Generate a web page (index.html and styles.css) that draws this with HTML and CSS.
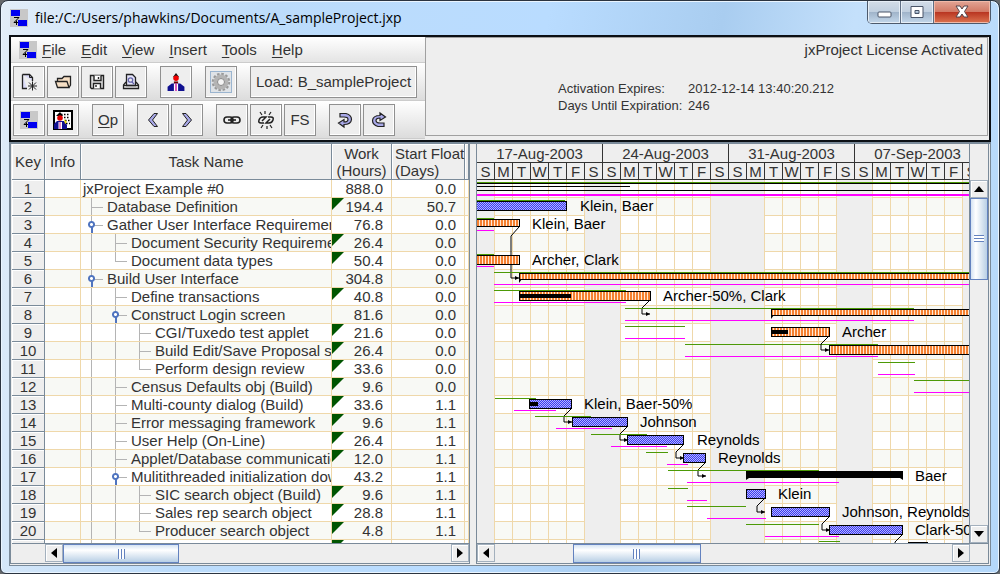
FILE: index.html
```
<!DOCTYPE html>
<html lang="en">
<head>
<meta charset="utf-8">
<title>A_sampleProject.jxp</title>
<link rel="stylesheet" href="styles.css">
</head>
<body>

<!-- shared shapes -->
<svg class="defs" width="0" height="0">
  <defs>
    <symbol id="logo" viewBox="0 0 18 18">
      <rect width="18" height="18" fill="#c8c8c8"/>
      <rect x="1" y="1" width="9" height="6" fill="#0000f0"/>
      <rect x="8" y="11" width="9" height="6" fill="#0000f0"/>
      <path d="M4 8.500H9L4 13.500H8M6.500 11.500V16" stroke="#000" fill="none"/>
    </symbol>
    <symbol id="man" viewBox="1 0 18 19">
      <path d="M7 5L10 1L13 5Z" fill="#111"/>
      <circle cx="10" cy="6" r="2.6" fill="#f00000"/>
      <path d="M8 9h4v3H8z" fill="#600"/>
      <path d="M2 18V14L6 11H14L18 14V18Z" fill="#101090"/>
      <path d="M8 11H12V18H8Z" fill="#fff"/>
      <path d="M10 11V18" stroke="#d020a0" stroke-width="1.4"/>
    </symbol>
  </defs>
</svg>

<div class="window">
  <div class="titlebar">
    <svg class="logo" width="18" height="18"><use href="#logo"/></svg>
    <h1>file:/C:/Users/phawkins/Documents/A_sampleProject.jxp</h1>
    <div class="winButtons">
      <button class="win min" aria-label="Minimize"><svg width="16" height="14"><rect x="2" y="7" width="13" height="5" rx="1" fill="#fff" stroke="#4a5568"/></svg></button>
      <button class="win max" aria-label="Maximize"><svg width="16" height="14"><path d="M2 1.500H14V12.500H2Z M6 5.500V8.500H10V5.500Z" fill="#fff" fill-rule="evenodd" stroke="#4a5568"/></svg></button>
      <button class="win close" aria-label="Close"><svg width="16" height="14"><path d="M2 1H6L8 4L10 1H14L10.500 6.500L14 12H10L8 9L6 12H2L5.500 6.500Z" fill="#fff" stroke="#54454a"/></svg></button>
    </div>
  </div>

  <div class="top">
    <div class="tools">
      <nav class="menu">
        <svg class="logo" width="18" height="18"><use href="#logo"/></svg>
        <button><u>F</u>ile</button>
        <button><u>E</u>dit</button>
        <button><u>V</u>iew</button>
        <button><u>I</u>nsert</button>
        <button><u>T</u>ools</button>
        <button><u>H</u>elp</button>
      </nav>
      <div class="toolbar">
        <div class="group">
          <button class="tool" aria-label="New"><svg width="20" height="20" fill="none" stroke="#222"><path d="M3.500 2.500H10.500L13.500 5.500V9M3.500 2.500V16.500H8" fill="#dcdcf8" stroke-width="1.300"/><path d="M10.500 2.500V5.500H13.500"/><path d="M13.500 9.500V18.500M9 14H18M10 10.500L17 17.500M17 10.500L10 17.500"/></svg></button>
          <button class="tool" aria-label="Open"><svg width="20" height="20" fill="#f6dfc4" stroke="#222" stroke-width="1.300"><path d="M4.500 9V6.500H9L11 4.500H17.500V13L16 15.500"/><path d="M2.500 9.500H14L16 15.500H4.500Z"/></svg></button>
          <button class="tool" aria-label="Save"><svg width="20" height="20" fill="none" stroke="#222" stroke-width="1.400"><path d="M3.500 3.500H16.500V16.500H4.500L3.500 15.500Z" fill="#ddd"/><path d="M7 3.500V8.500H14V3.500M6.500 16.500V11.500H13.500V16.500" fill="#fff"/><path d="M11.500 5V7M9 13V15"/></svg></button>
          <button class="tool" aria-label="Print preview"><svg width="20" height="20" fill="#eee" stroke="#222" stroke-width="1.300"><path d="M5 10L2.500 13V16.500H17.500V13L15 10"/><path d="M5.500 13.500V2.500H11.500L14.500 5.500V13.500Z" fill="#e4e4fa"/><path d="M3 13.500H17"/><circle cx="9.500" cy="8" r="2.200" stroke="#66a"/><path d="M11 10L13 12" stroke="#66a"/></svg></button>
        </div>
        <div class="group">
          <button class="tool" aria-label="Resources"><svg width="20" height="20"><use href="#man"/></svg></button>
        </div>
        <div class="group">
          <button class="tool" aria-label="Settings"><svg width="22" height="22"><rect x=".5" y=".5" width="21" height="21" fill="#dfe3e7" stroke="#9bb5d0"/><circle cx="11" cy="11" r="8" fill="none" stroke="#999" stroke-width="2.500" stroke-dasharray="2.500 1.690"/><circle cx="11" cy="11" r="5.500" fill="#eee" stroke="#b4b4b4" stroke-width="4"/><circle cx="11" cy="11" r="3.500" fill="#f4f4f4" stroke="#888"/></svg></button>
        </div>
        <div class="group">
          <button class="tool load">Load: B_sampleProject</button>
        </div>
      </div>
      <div class="toolbar">
        <div class="group">
          <button class="tool" aria-label="Gantt"><svg width="18" height="18"><use href="#logo"/></svg></button>
          <button class="tool" aria-label="Resource usage"><svg width="20" height="20"><rect x="1" y="1" width="18" height="18" fill="#fff" stroke="#000" stroke-width="2"/><path d="M8 4.500H17M11 7.500H17M12 10.500H17M13 13.500H17" stroke="#000" stroke-width="1.500" stroke-dasharray="1.500 1.500"/><path d="M3 6L7 2L10 6Z"/><circle cx="7" cy="8" r="2.800" fill="#e00000"/><path d="M1 19V14L4 11H11L14 15V19Z" fill="#101090"/><path d="M5.500 12H9V19H5.500Z" fill="#fff"/><path d="M7 12V19" stroke="#d020a0"/><path d="M11 9L14 12L12 14Z" fill="#f0e000"/></svg></button>
        </div>
        <div class="group">
          <button class="tool op"><u>O</u>p</button>
        </div>
        <div class="group">
          <button class="tool" aria-label="Outdent"><svg width="20" height="20"><path d="M11 3.500H14.500L9.500 10L14.500 16.500H11L5.500 10Z" fill="#a8a8e8" stroke="#222"/></svg></button>
          <button class="tool" aria-label="Indent"><svg width="20" height="20"><path d="M9 3.500H5.500L10.500 10L5.500 16.500H9L14.500 10Z" fill="#a8a8e8" stroke="#222"/></svg></button>
        </div>
        <div class="group">
          <button class="tool" aria-label="Link"><svg width="20" height="20" fill="none" stroke="#222" stroke-width="1.600"><rect x="2" y="7" width="9" height="6" rx="3"/><rect x="9" y="7" width="9" height="6" rx="3"/><path d="M6 10H14"/></svg></button>
          <button class="tool" aria-label="Unlink"><svg width="20" height="20" fill="none" stroke="#222" stroke-width="1.500"><path d="M8 13H5Q2 13 3 10Q4 7 7 7H10L6 11M12 7H15Q18 7 17 10Q16 13 13 13H10L14 9"/><path d="M4 2L6 5M9 1V4M15 2L13 5M5 18L7 15M11 19V16M16 18L14 15" stroke-width="1.200"/></svg></button>
          <button class="tool fs">FS</button>
        </div>
        <div class="group">
          <button class="tool" aria-label="Undo"><svg width="20" height="20"><path d="M5 3.500H11Q16.500 5 16.500 9.500Q16 14.500 9 14.500V17L3.500 13L9 9.500V12Q13 12 13 9.500Q13 7 9 7H5Z" fill="#a8a8e8" stroke="#222" stroke-width="1.200"/></svg></button>
          <button class="tool" aria-label="Redo"><svg width="20" height="20"><path d="M15 16.500H9Q3.500 15 3.500 10.500Q4 5.500 11 5.500V3L16.500 7L11 10.500V8Q7 8 7 10.500Q7 13 11 13H15Z" fill="#a8a8e8" stroke="#222" stroke-width="1.200"/></svg></button>
        </div>
      </div>
    </div>

    <div class="license">
      <p class="status">jxProject License Activated</p>
      <dl>
        <dt>Activation Expires:</dt><dd>2012-12-14 13:40:20.212</dd>
        <dt>Days Until Expiration:</dt><dd>246</dd>
      </dl>
    </div>
  </div>

  <div class="split">
    <div class="pane tasks">
      <div class="tableView">
        <table>
          <colgroup><col class="cKey"><col class="cInfo"><col class="cTask"><col class="cWork"><col class="cFloat"><col></colgroup>
          <thead>
            <tr><th>Key</th><th>Info</th><th>Task Name</th><th>Work<br>(Hours)</th><th class="left">Start Float<br>(Days)</th><th></th></tr>
          </thead>
          <tbody>
            <tr><th>1</th><td></td><td class="task">jxProject Example #0</td><td class="num">888.0</td><td class="num">0.0</td><td></td></tr>
            <tr><th>2</th><td></td><td class="task"><i class="tee"></i>Database Definition</td><td class="num mark">194.4</td><td class="num">50.7</td><td></td></tr>
            <tr><th>3</th><td></td><td class="task"><i class="tee knob"></i>Gather User Interface Requirements</td><td class="num">76.8</td><td class="num">0.0</td><td></td></tr>
            <tr><th>4</th><td></td><td class="task"><i class="line"></i><i class="tee"></i>Document Security Requirements</td><td class="num mark">26.4</td><td class="num">0.0</td><td></td></tr>
            <tr><th>5</th><td></td><td class="task"><i class="line"></i><i class="end"></i>Document data types</td><td class="num mark">50.4</td><td class="num">0.0</td><td></td></tr>
            <tr><th>6</th><td></td><td class="task"><i class="tee knob"></i>Build User Interface</td><td class="num">304.8</td><td class="num">0.0</td><td></td></tr>
            <tr><th>7</th><td></td><td class="task"><i class="line"></i><i class="tee"></i>Define transactions</td><td class="num mark">40.8</td><td class="num">0.0</td><td></td></tr>
            <tr><th>8</th><td></td><td class="task"><i class="line"></i><i class="tee knob"></i>Construct Login screen</td><td class="num">81.6</td><td class="num">0.0</td><td></td></tr>
            <tr><th>9</th><td></td><td class="task"><i class="line"></i><i class="line"></i><i class="tee"></i>CGI/Tuxedo test applet</td><td class="num mark">21.6</td><td class="num">0.0</td><td></td></tr>
            <tr><th>10</th><td></td><td class="task"><i class="line"></i><i class="line"></i><i class="tee"></i>Build Edit/Save Proposal screen</td><td class="num mark">26.4</td><td class="num">0.0</td><td></td></tr>
            <tr><th>11</th><td></td><td class="task"><i class="line"></i><i class="line"></i><i class="end"></i>Perform design review</td><td class="num mark">33.6</td><td class="num">0.0</td><td></td></tr>
            <tr><th>12</th><td></td><td class="task"><i class="line"></i><i class="tee"></i>Census Defaults obj (Build)</td><td class="num mark">9.6</td><td class="num">0.0</td><td></td></tr>
            <tr><th>13</th><td></td><td class="task"><i class="line"></i><i class="tee"></i>Multi-county dialog (Build)</td><td class="num mark">33.6</td><td class="num">1.1</td><td></td></tr>
            <tr><th>14</th><td></td><td class="task"><i class="line"></i><i class="tee"></i>Error messaging framework</td><td class="num mark">9.6</td><td class="num">1.1</td><td></td></tr>
            <tr><th>15</th><td></td><td class="task"><i class="line"></i><i class="tee"></i>User Help (On-Line)</td><td class="num mark">26.4</td><td class="num">1.1</td><td></td></tr>
            <tr><th>16</th><td></td><td class="task"><i class="line"></i><i class="tee"></i>Applet/Database communication</td><td class="num mark">12.0</td><td class="num">1.1</td><td></td></tr>
            <tr><th>17</th><td></td><td class="task"><i class="line"></i><i class="tee knob"></i>Mulitithreaded initialization download</td><td class="num">43.2</td><td class="num">1.1</td><td></td></tr>
            <tr><th>18</th><td></td><td class="task"><i class="line"></i><i class="line"></i><i class="tee"></i>SIC search object (Build)</td><td class="num mark">9.6</td><td class="num">1.1</td><td></td></tr>
            <tr><th>19</th><td></td><td class="task"><i class="line"></i><i class="line"></i><i class="tee"></i>Sales rep search object</td><td class="num mark">28.8</td><td class="num">1.1</td><td></td></tr>
            <tr><th>20</th><td></td><td class="task"><i class="line"></i><i class="line"></i><i class="end"></i>Producer search object</td><td class="num mark">4.8</td><td class="num">1.1</td><td></td></tr>
            <tr><th>21</th><td></td><td class="task"><i class="line"></i><i class="tee"></i>Communication dialog</td><td class="num mark">9.6</td><td class="num">1.1</td><td></td></tr>
          </tbody>
        </table>
      </div>
      <div class="hbar">
        <div class="corner"></div>
        <button class="arrow" aria-label="Scroll left"><svg width="8" height="10"><path d="M7 0V10L1 5Z"/></svg></button>
        <div class="track"><div class="thumb thumbTasks"></div></div>
        <button class="arrow" aria-label="Scroll right"><svg width="8" height="10"><path d="M1 0V10L7 5Z"/></svg></button>
      </div>
    </div>

    <div class="pane gantt">
      <div class="chart">
        <div class="chartMain">
          <div class="weeks">
            <div class="week"><b>17-Aug-2003</b><span>S</span><span>M</span><span>T</span><span>W</span><span>T</span><span>F</span><span>S</span></div>
            <div class="week"><b>24-Aug-2003</b><span>S</span><span>M</span><span>T</span><span>W</span><span>T</span><span>F</span><span>S</span></div>
            <div class="week"><b>31-Aug-2003</b><span>S</span><span>M</span><span>T</span><span>W</span><span>T</span><span>F</span><span>S</span></div>
            <div class="week"><b>07-Sep-2003</b><span>S</span><span>M</span><span>T</span><span>W</span><span>T</span><span>F</span><span>S</span></div>
          </div>
          <div class="plot">
            <svg class="bars" width="100%" height="100%">
              <defs>
                <pattern id="grid" x="17" width="18" height="36" patternUnits="userSpaceOnUse">
                  <rect width="18" height="18" fill="#fff"/>
                  <rect y="18" width="18" height="18" fill="#f8f9f5"/>
                  <path d="M.5 0V36M0 17.500H18M0 35.500H18" stroke="#efd8aa"/>
                </pattern>
                <pattern id="blue" width="2" height="2" patternUnits="userSpaceOnUse">
                  <rect width="2" height="2" fill="#b4b4ff"/>
                  <path d="M0 0h1v1h-1zM1 1h1v1h-1z" fill="#3a3af0"/>
                </pattern>
                <pattern id="orange" width="3" height="3" patternUnits="userSpaceOnUse">
                  <rect width="3" height="3" fill="#ffe9d6"/>
                  <rect width="2" height="3" fill="#f58030"/>
                </pattern>
                <g id="link">
                  <path d="M0 12L-8 20V26H0" class="wire"/>
                  <path d="M-4 24L0 26L-4 28Z"/>
                </g>
              </defs>

              <!-- working days, 1-Sep is a holiday -->
              <g fill="url(#grid)">
                <rect x="17" width="91" height="400"/>
                <rect x="143" width="91" height="400"/>
                <rect x="287" width="73" height="400"/>
                <rect x="395" width="91" height="400"/>
              </g>

              <g>
                <path class="early" d="M0 2.500H500"/>
                <path class="wire" d="M0 3.500H500M0 6.500H153M0 10.500H500"/>
                <path class="late thick" d="M0 15H500"/>
              </g>
              <g transform="translate(0 18)">
                <rect class="blue" x="-5.500" y="3.500" width="95" height="9"/>
                <path class="early" d="M0 2.500H88"/>
                <text x="103" y="13">Klein, Baer</text>
              </g>
              <g transform="translate(0 36)">
                <rect class="orange" x="-5.500" y="3.500" width="48" height="7"/>
                <path class="early" d="M0 2.500H17"/><path class="late" d="M0 14.500H17"/>
                <text x="55" y="13">Klein, Baer</text>
                <path class="wire" d="M42 11L34 20V62H42"/><path d="M38 60L42 62L38 64Z"/>
              </g>
              <g transform="translate(0 72)">
                <rect class="orange" x="-5.500" y="3.500" width="48" height="9"/>
                <path class="early" d="M0 2.500H17"/><path class="late" d="M0 14.500H17"/>
                <text x="55" y="13">Archer, Clark</text>
              </g>
              <g transform="translate(0 90)">
                <rect class="orange" x="42.500" y="3.500" width="470" height="6"/>
                <path d="M42 9H45L42 13Z"/>
                <path class="early" d="M17 2.500H500"/><path class="late" d="M17 14.500H500"/>
              </g>
              <g transform="translate(0 108)">
                <rect class="orange" x="42.500" y="3.500" width="131" height="9"/>
                <rect x="42" y="6" width="52" height="4"/>
                <path class="early" d="M17 2.500H149"/><path class="late" d="M17 14.500H149"/>
                <text x="186" y="13">Archer-50%, Clark</text>
                <use href="#link" x="173"/>
              </g>
              <g transform="translate(0 126)">
                <rect class="orange" x="294.500" y="3.500" width="220" height="6"/>
                <path d="M294 9H297L294 13Z"/>
                <path class="early" d="M148 2.500H437"/><path class="late" d="M148 14.500H437"/>
              </g>
              <g transform="translate(0 144)">
                <rect class="orange" x="294.500" y="3.500" width="58" height="9"/>
                <rect x="294" y="6" width="17" height="4"/>
                <path class="early" d="M148 2.500H208"/><path class="late" d="M148 14.500H208"/>
                <text x="365" y="13">Archer</text>
              </g>
              <g transform="translate(0 162)">
                <rect class="orange" x="352.500" y="3.500" width="160" height="9"/>
                <path class="early" d="M208 2.500H401"/><path class="late" d="M208 14.500H401"/>
                <use href="#link" x="352" y="-18"/>
              </g>
              <g transform="translate(0 180)">
                <path class="early" d="M401 2.500H438"/><path class="late" d="M401 14.500H438"/>
              </g>
              <g transform="translate(0 198)">
                <path class="early" d="M437 2.500H500"/><path class="late" d="M437 14.500H500"/>
              </g>
              <g transform="translate(0 216)">
                <rect class="blue" x="52.500" y="3.500" width="42" height="9"/>
                <rect x="53" y="6" width="8" height="4"/>
                <path class="early" d="M18 2.500H59"/><path class="late" d="M37 14.500H79"/>
                <text x="107" y="13">Klein, Baer-50%</text>
                <use href="#link" x="95"/>
              </g>
              <g transform="translate(0 234)">
                <rect class="blue" x="95.500" y="3.500" width="55" height="9"/>
                <path class="early" d="M58 2.500H114"/><path class="late" d="M79 14.500H135"/>
                <text x="163" y="13">Johnson</text>
                <use href="#link" x="151"/>
              </g>
              <g transform="translate(0 252)">
                <rect class="blue" x="150.500" y="3.500" width="56" height="9"/>
                <path class="early" d="M114 2.500H170"/><path class="late" d="M134 14.500H190"/>
                <text x="220" y="13">Reynolds</text>
                <use href="#link" x="207"/>
              </g>
              <g transform="translate(0 270)">
                <rect class="blue" x="206.500" y="3.500" width="22" height="9"/>
                <path class="early" d="M169 2.500H191"/><path class="late" d="M190 14.500H211"/>
                <text x="241" y="13">Reynolds</text>
                <use href="#link" x="229"/>
              </g>
              <g transform="translate(0 288)">
                <path class="early" d="M191 2.500H342"/><path class="late" d="M210 14.500H362"/>
                <path d="M269 3H426V12L423 10H272L269 12Z"/>
                <text x="438" y="13">Baer</text>
              </g>
              <g transform="translate(0 306)">
                <rect class="blue" x="269.500" y="3.500" width="19" height="9"/>
                <path class="early" d="M191 2.500H211"/><path class="late" d="M210 14.500H230"/>
                <text x="301" y="13">Klein</text>
                <use href="#link" x="288"/>
              </g>
              <g transform="translate(0 324)">
                <rect class="blue" x="294.500" y="3.500" width="58" height="9"/>
                <path class="early" d="M210 2.500H269"/><path class="late" d="M230 14.500H289"/>
                <text x="365" y="13">Johnson, Reynolds</text>
                <use href="#link" x="353"/>
              </g>
              <g transform="translate(0 342)">
                <rect class="blue" x="352.500" y="3.500" width="73" height="9"/>
                <path class="early" d="M269 2.500H342"/><path class="late" d="M288 14.500H362"/>
                <text x="438" y="13">Clark-50%, Baer</text>
                <use href="#link" x="426"/>
              </g>
              <g transform="translate(0 360)">
                <path class="early" d="M342 1.500H363"/>
                <rect x="431" y="2" width="20" height="9"/>
                <text x="464" y="13">Baer</text>
              </g>
            </svg>
          </div>
        </div>
        <div class="vbar">
          <div class="vcorner"></div>
          <button class="arrow" aria-label="Scroll up"><svg width="10" height="6"><path d="M0 6H10L5 0Z"/></svg></button>
          <div class="track vtrack"><div class="thumb vthumb"></div></div>
          <button class="arrow" aria-label="Scroll down"><svg width="10" height="6"><path d="M0 0H10L5 6Z"/></svg></button>
        </div>
      </div>
      <div class="hbar">
        <button class="arrow" aria-label="Scroll left"><svg width="8" height="10"><path d="M7 0V10L1 5Z"/></svg></button>
        <div class="track"><div class="thumb thumbGantt"></div></div>
        <button class="arrow" aria-label="Scroll right"><svg width="8" height="10"><path d="M1 0V10L7 5Z"/></svg></button>
        <div class="endCorner"></div>
      </div>
    </div>
  </div>
</div>

</body>
</html>
```
FILE: styles.css
```
* {
  box-sizing: border-box;
}

body {
  margin: 0;
  background: #66696c;
  font: 15px/17px "Liberation Sans", Arial, sans-serif;
  color: #333;
}

button {
  font: inherit;
  color: inherit;
  padding: 0;
  margin: 0;
}

svg {
  display: block;
  flex: none;
}

.defs {
  position: absolute;
}

u {
  text-underline-offset: 2px;
}

/* window frame */
.window {
  display: flex;
  flex-direction: column;
  height: 100vh;
  padding: 0 8px 7px;
  border: 1px solid #2b3440;
  border-radius: 8px 8px 6px 6px;
  box-shadow: inset 0 0 0 1px #eaf5ff;
  background: linear-gradient(100deg, #e2edf8 0%, #bcdcfb 25%, #b9dcff 50%, #a9cdf0 66%, #c4e0fb 78%, #b4d8fb 100%);
}

.titlebar {
  display: flex;
  align-items: center;
  height: 34px;
  padding-left: 1px;
  gap: 7px;
  flex: none;
}

.titlebar h1 {
  flex: 1;
  margin: 0;
  font: 14px/20px "Open Sans", "Noto Sans", sans-serif;
  color: #000;
}

.winButtons {
  display: flex;
  align-self: flex-start;
  border: 1px solid #4d5a6c;
  border-top: 0;
  border-radius: 0 0 5px 5px;
  overflow: hidden;
}

.win {
  display: flex;
  align-items: center;
  justify-content: center;
  width: 33px;
  height: 22px;
  border: 0;
  border-right: 1px solid #5f6f84;
  box-shadow: inset 0 0 0 1px #e6eef6;
  background: linear-gradient(#d3dde8, #c0cfdf 48%, #9fb3c9 50%, #c3d7ea);
}

.close {
  width: 56px;
  border-right: 0;
  box-shadow: inset 0 0 0 1px #f0b9a8;
  background: linear-gradient(#e2a595, #d27a66 48%, #b83420 50%, #dc7450);
}

/* menu, toolbars, license */
.top {
  display: flex;
  flex: none;
  height: 107px;
  border: 2px solid #0b0f14;
  background: #eee;
}

.tools {
  width: 414px;
  display: flex;
  flex-direction: column;
}

.menu {
  display: flex;
  align-items: center;
  height: 26px;
  padding-left: 8px;
  background: linear-gradient(#fff, #e4e4e4);
  border-bottom: 1px solid #ccc;
}

.menu button {
  border: 0;
  background: none;
  margin-right: 15px;
}

.menu .logo {
  margin-right: 5px;
}

.toolbar {
  display: flex;
  align-items: center;
  gap: 13px;
  height: 38px;
  padding-left: 2px;
  background: linear-gradient(#fff, #dcdcdc);
  border-bottom: 1px solid #ccc;
}

.group {
  display: flex;
  gap: 2px;
}

.tool {
  display: flex;
  align-items: center;
  justify-content: center;
  width: 32px;
  height: 32px;
  border: 1px solid #909090;
  background: #eee;
  box-shadow: inset -1px -1px 0 #fff;
}

.load {
  width: 167px;
}

.license {
  flex: 1;
  margin: 0 1px 4px 0;
  border: 1px solid #a0a0a0;
  padding: 3px 4px;
}

.status {
  margin: 0;
  text-align: right;
}

.license dl {
  display: grid;
  grid-template-columns: 130px 1fr;
  margin: 22px 0 0 128px;
  font-size: 13px;
}

.license dd {
  margin: 0;
}

/* split pane */
.split {
  display: flex;
  flex: 1;
  min-height: 0;
  gap: 6px;
  padding-right: 1px;
  border: 1px solid #7a8a99;
  border-top-width: 2px;
  background: #eee;
}

.pane {
  display: flex;
  flex-direction: column;
  min-width: 0;
  border: 1px solid #7a8a99;
  border-top: 0;
  margin-bottom: 1px;
}

.tasks {
  width: 460px;
  flex: none;
  padding-left: 1px;
}

.gantt {
  flex: 1;
}

.tableView {
  flex: 1;
  min-height: 0;
  overflow: hidden;
  background: #fff;
}

table {
  width: 100%;
  table-layout: fixed;
  border-collapse: separate;
  border-spacing: 0;
}

.cKey { width: 33px; }
.cInfo { width: 36px; }
.cTask { width: 251px; }
.cWork { width: 60px; }
.cFloat { width: 73px; }

th {
  padding: 0;
  font-weight: normal;
  white-space: nowrap;
  background: #eee;
  border-right: 1px solid #7a8a99;
  border-bottom: 1px solid #7a8a99;
  box-shadow: inset 1px 1px 0 #fff;
}

thead th {
  height: 36px;
  line-height: 17px;
}

.left {
  text-align: left;
  padding-left: 3px;
}

td {
  height: 18px;
  padding: 0;
  overflow: hidden;
  white-space: nowrap;
  border-right: 1px solid #efd8aa;
  border-bottom: 1px solid #efd8aa;
}

tbody tr:nth-child(even) td {
  background-color: #f8f9f5;
}

.task {
  padding-left: 2px;
}

.num {
  text-align: right;
  padding-right: 8px;
}

/* corner flag on the work cell */
.mark::before {
  content: "";
  float: left;
  border-top: 12px solid #005500;
  border-right: 12px solid transparent;
}

/* tree guides, one 24px step per level */
.line, .tee, .end {
  display: inline-block;
  vertical-align: top;
  width: 24px;
  height: 17px;
  background: linear-gradient(#b4b4b4, #b4b4b4) 8px 0 / 1px 100% no-repeat;
}

.tee {
  background:
    linear-gradient(#b4b4b4, #b4b4b4) 8px 0 / 1px 100% no-repeat,
    linear-gradient(#b4b4b4, #b4b4b4) 8px 9px / 12px 1px no-repeat;
}

.end {
  background:
    linear-gradient(#b4b4b4, #b4b4b4) 8px 0 / 1px 9px no-repeat,
    linear-gradient(#b4b4b4, #b4b4b4) 8px 9px / 12px 1px no-repeat;
}

.knob {
  background:
    radial-gradient(circle, #fff 1px, #4f74bf 2px, #4f74bf 3px, transparent 4px) 4px 4px / 9px 9px no-repeat,
    linear-gradient(#4f74bf, #4f74bf) 8px 11px / 2px 6px no-repeat,
    linear-gradient(#b4b4b4, #b4b4b4) 8px 0 / 1px 100% no-repeat,
    linear-gradient(#b4b4b4, #b4b4b4) 8px 9px / 12px 1px no-repeat;
}

/* scroll bars */
.hbar {
  display: flex;
  flex: none;
  height: 20px;
  border-top: 1px solid #7a8a99;
}

.vbar {
  display: flex;
  flex-direction: column;
  width: 19px;
  border-left: 1px solid #7a8a99;
}

.vcorner {
  height: 36px;
}

.corner {
  width: 33px;
}

.endCorner {
  width: 18px;
}

.arrow {
  display: flex;
  align-items: center;
  justify-content: center;
  width: 18px;
  height: 18px;
  border: 1px solid #a3b0bd;
  background: #eee;
  box-shadow: inset 1px 1px 0 #fff;
}

.track {
  flex: 1;
  display: flex;
  min-width: 0;
}

.thumb {
  display: flex;
  align-items: center;
  justify-content: center;
  border: 1px solid #6382bf;
  background: linear-gradient(#d5e3f3, #fff 30%, #b8cfe5);
}

.thumb::before {
  content: "";
  width: 7px;
  height: 10px;
  background: repeating-linear-gradient(90deg, #6382bf 0 1px, #fff 1px 3px);
}

.thumbTasks {
  width: 30%;
}

.thumbGantt {
  width: 28%;
  margin-left: 17%;
}

.vthumb {
  width: 100%;
  height: 25%;
  background: linear-gradient(90deg, #d5e3f3, #fff 30%, #b8cfe5);
}

.vthumb::before {
  width: 10px;
  height: 7px;
  background: repeating-linear-gradient(#6382bf 0 1px, #fff 1px 3px);
}

/* gantt chart */
.chart {
  display: flex;
  flex: 1;
  min-height: 0;
}

.chartMain {
  display: flex;
  flex-direction: column;
  flex: 1;
  min-width: 0;
}

.weeks {
  display: flex;
  height: 36px;
  flex: none;
  overflow: hidden;
  border-bottom: 1px solid #333;
}

.week {
  display: grid;
  grid-template-columns: repeat(7, 18px);
  grid-template-rows: 19px 16px;
  flex: none;
  text-align: center;
}

.week b {
  grid-column: 1 / 8;
  font-weight: normal;
  line-height: 19px;
  border-right: 1px solid #333;
  border-bottom: 1px solid #333;
}

.week span {
  border-right: 1px solid #333;
}

.plot {
  flex: 1;
  min-height: 0;
  overflow: hidden;
}

.bars text {
  fill: #000;
}

.early, .late, .wire {
  fill: none;
  stroke: #4c9a06;
}

.late {
  stroke: #f0f;
}

.wire {
  stroke: #000;
}

.thick {
  stroke-width: 2px;
}

.blue, .orange {
  fill: url(#blue);
  stroke: #000;
}

.orange {
  fill: url(#orange);
}
```
